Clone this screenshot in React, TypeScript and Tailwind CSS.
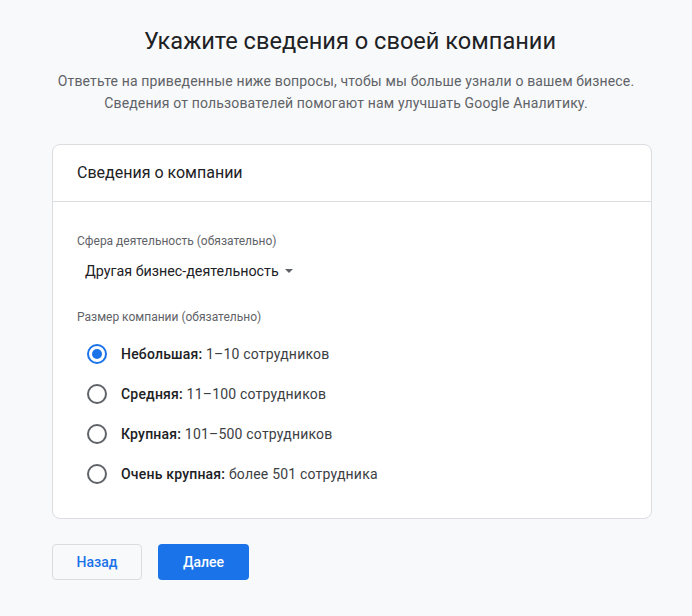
import React from "react";

const options = [
  { bold: "Небольшая:", rest: " 1–10 сотрудников", checked: true },
  { bold: "Средняя:", rest: " 11–100 сотрудников", checked: false },
  { bold: "Крупная:", rest: " 101–500 сотрудников", checked: false },
  { bold: "Очень крупная:", rest: " более 501 сотрудника", checked: false },
];

export default function App() {
  return (
    <div
      className="w-[692px] h-[616px] bg-[#f8f9fa] flex flex-col items-center"
      style={{ fontFamily: "Roboto, 'Liberation Sans', sans-serif" }}
    >
      <h1 className="mt-[25px] ml-[8px] text-[23.6px] leading-[32px] text-[#202124] font-normal">
        Укажите сведения о своей компании
      </h1>
      <p className="mt-[13px] text-[14px] leading-[22px] tracking-[0.15px] text-[#5f6368] text-center">
        Ответьте на приведенные ниже вопросы, чтобы мы больше узнали о вашем бизнесе.
        <br />
        Сведения от пользователей помогают нам улучшать Google Аналитику.
      </p>
      <div className="mt-[30px] w-[600px] self-start ml-[52px] bg-white border border-[#dadce0] rounded-[8px]">
        <div className="h-[57px] px-[24px] flex items-center text-[16px] text-[#202124] border-b border-[#dadce0]">
          Сведения о компании
        </div>
        <div className="px-[24px] pt-[31px] pb-[24px]">
          <div className="text-[12px] leading-[16px] text-[#5f6368]">Сфера деятельность (обязательно)</div>
          <div className="mt-[12px] ml-[8px] flex items-center text-[14.3px] leading-[20px] text-[#202124]">
            Другая бизнес-деятельность
            <svg width="8" height="4" viewBox="0 0 10 5" className="ml-[6px]">
              <path d="M0 0 L10 0 L5 5 Z" fill="#5f6368" />
            </svg>
          </div>
          <div className="mt-[28px] text-[12px] leading-[16px] text-[#5f6368]">Размер компании (обязательно)</div>
          <div className="mt-[9px] flex flex-col">
            {options.map((o, i) => (
              <div key={i} className="h-[40px] flex items-center">
                <div className="w-[40px] h-[40px] flex items-center justify-center">
                  <div
                    className={
                      o.checked
                        ? "w-[20px] h-[20px] rounded-full border-2 border-[#1a73e8] flex items-center justify-center"
                        : "w-[20px] h-[20px] rounded-full border-2 border-[#5f6368]"
                    }
                  >
                    {o.checked && <div className="w-[10px] h-[10px] rounded-full bg-[#1a73e8]" />}
                  </div>
                </div>
                <div className="ml-[4px] text-[14px] tracking-[0.2px] text-[#202124]">
                  <span className="font-medium">{o.bold}</span>
                  <span className="text-[#3c4043]">{o.rest}</span>
                </div>
              </div>
            ))}
          </div>
        </div>
      </div>
      <div className="self-start ml-[52px] mt-[25px] flex gap-[16px]">
        <button className="w-[90px] h-[36px] rounded-[4px] border border-[#dadce0] bg-[#f8f9fa] text-[14px] font-medium text-[#1a73e8]">
          Назад
        </button>
        <button className="w-[91px] h-[36px] rounded-[4px] bg-[#1a73e8] text-[14px] font-medium text-white">
          Далее
        </button>
      </div>
    </div>
  );
}
